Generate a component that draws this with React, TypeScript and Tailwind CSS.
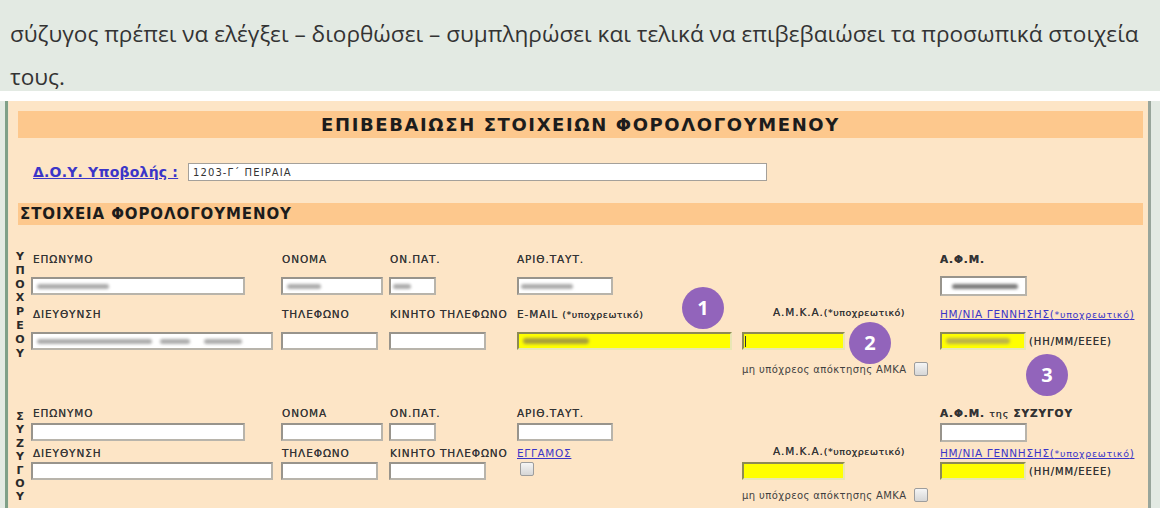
import React from 'react';

const form = { fontFamily: '"DejaVu Sans", Verdana, sans-serif' };

// column widths measured from the left edge of the field area (x = 31)
const cols = ['w-[250px]', 'w-[108px]', 'w-[128px]', 'w-[225px]', 'w-[198px]'];

function Blur({ w, ml = 4, dark = false }: { w: number; ml?: number; dark?: boolean }) {
  return (
    <span
      className={`block h-[5px] rounded-full blur-[1.5px] ${dark ? 'bg-[#7a7a7a]' : 'bg-[#ababab]'}`}
      style={{ width: w, marginLeft: ml }}
    />
  );
}

function Field({
  w,
  h = 18,
  yellow = false,
  children,
}: {
  w: number;
  h?: number;
  yellow?: boolean;
  children?: React.ReactNode;
}) {
  return (
    <div
      className={`flex items-center gap-2 border-2 ${
        yellow
          ? 'bg-[#ffff00] border-t-[#8d8b55] border-l-[#8d8b55] border-r-[#e9e6b4] border-b-[#e9e6b4]'
          : 'bg-white border-t-[#98948c] border-l-[#98948c] border-r-[#b8b4ab] border-b-[#b8b4ab]'
      }`}
      style={{ width: w, height: h }}
    >
      {children}
    </div>
  );
}

function Check() {
  return (
    <span className="inline-block w-[14px] h-[14px] rounded-[2px] border border-[#9d9d9d] bg-gradient-to-b from-[#f5f5f5] to-[#d6d6d6]" />
  );
}

function Label({ children, className = '' }: { children: React.ReactNode; className?: string }) {
  return (
    <span
      className={`text-[10.5px] tracking-[0.9px] text-[#333] whitespace-nowrap [text-shadow:0_0_0.5px_#555] ${className}`}
    >
      {children}
    </span>
  );
}

function Req() {
  return <span className="text-[9.5px] tracking-[0.5px]">(*υποχρεωτικό)</span>;
}

function Link({ children }: { children: React.ReactNode }) {
  return <span className="text-[10.5px] tracking-[0.7px] text-[#3b35c8] underline whitespace-nowrap">{children}</span>;
}

function Badge({ n, x, y }: { n: number; x: string; y: string }) {
  return (
    <div
      className={`absolute ${x} ${y} w-[42px] h-[42px] rounded-full bg-[#9264bb] flex items-center justify-center text-white text-[20px] font-bold`}
      style={{ fontFamily: '"Open Sans", sans-serif' }}
    >
      {n}
    </div>
  );
}

function Letters({ text, className }: { text: string; className: string }) {
  return (
    <div className={`w-[22px] shrink-0 flex flex-col items-center font-bold text-[11px] text-[#2a2a2a] ${className}`}>
      {text.split('').map((c, i) => (
        <span key={i}>{c}</span>
      ))}
    </div>
  );
}

function NoAmka() {
  return (
    <div className="flex items-center gap-[8px] whitespace-nowrap">
      <span className="text-[10px] tracking-[0.4px] text-[#3f3f3f]">μη υπόχρεος απόκτησης ΑΜΚΑ</span>
      <Check />
    </div>
  );
}

export default function App() {
  return (
    <div className="relative w-[1160px] h-[508px] overflow-hidden bg-white">
      {/* intro text */}
      <div
        className="h-[91px] bg-[#e3eae3] pl-[10px] pt-[12px] text-[22.6px] leading-[43px] text-[#333] whitespace-nowrap"
        style={{ fontFamily: '"Open Sans", sans-serif' }}
      >
        σύζυγος πρέπει να ελέγξει – διορθώσει – συμπληρώσει και τελικά να επιβεβαιώσει τα προσωπικά στοιχεία
        <br />
        τους.
      </div>
      <div className="h-[10px] bg-white" />

      {/* form frame */}
      <div className="flex h-[407px]" style={form}>
        <div className="w-[5px] bg-[#e3eae3]" />
        <div className="w-[3px] bg-[#7fa088]" />
        <div className="w-[1px] bg-[#f3e4cd]" />
        <div className="flex-1 bg-[#fde5c6] flex flex-col">
          <div className="mt-[10px] ml-[9px] mr-[5px] h-[27px] bg-[#fdc88d] flex items-center justify-center">
            <span className="text-[18px] font-bold tracking-[1.6px] text-[#1c1c1c]">
              ΕΠΙΒΕΒΑΙΩΣΗ ΣΤΟΙΧΕΙΩΝ ΦΟΡΟΛΟΓΟΥΜΕΝΟΥ
            </span>
          </div>

          <div className="mt-[25px] flex items-center h-[18px]">
            <span className="ml-[24px] w-[155px] text-[14px] font-bold tracking-[0.2px] text-[#3b35c8] underline whitespace-nowrap">
              Δ.Ο.Υ. Υποβολής :
            </span>
            <div className="w-[579px] h-[18px] bg-white border border-[#a4a09a] flex items-center pl-[4px] text-[10px] tracking-[1.1px] text-[#333]">
              1203-Γ΄ ΠΕΙΡΑΙΑ
            </div>
          </div>

          <div className="mt-[22px] ml-[9px] mr-[5px] h-[22px] bg-[#fdc88d] flex items-center pl-[2px]">
            <span className="text-[15px] font-bold tracking-[0.9px] text-[#1c1c1c]">ΣΤΟΙΧΕΙΑ ΦΟΡΟΛΟΓΟΥΜΕΝΟΥ</span>
          </div>

          {/* taxpayer */}
          <div className="flex">
            <Letters text="ΥΠΟΧΡΕΟΥ" className="pt-[25px] leading-[13.8px]" />
            <div className="flex flex-col">
              <div className="mt-[25px] h-[16px] flex items-center">
                <div className={`${cols[0]} pl-[2px]`}><Label>ΕΠΩΝΥΜΟ</Label></div>
                <div className={`${cols[1]} pl-[1px]`}><Label>ΟΝΟΜΑ</Label></div>
                <div className={`${cols[2]} pl-[1px]`}><Label>ΟΝ.ΠΑΤ.</Label></div>
                <div className={cols[3]}><Label>ΑΡΙΘ.ΤΑΥΤ.</Label></div>
                <div className={cols[4]} />
                <div><Label className="font-bold text-[#111] tracking-[0.3px]">Α.Φ.Μ.</Label></div>
              </div>
              <div className="mt-[10px] h-[20px] flex items-center">
                <div className={cols[0]}><Field w={214}><Blur w={72} /></Field></div>
                <div className={cols[1]}><Field w={102}><Blur w={34} /></Field></div>
                <div className={cols[2]}><Field w={47}><Blur w={18} ml={2} /></Field></div>
                <div className={cols[3]}><Field w={96}><Blur w={52} ml={2} /></Field></div>
                <div className={cols[4]} />
                <div><Field w={87} h={20}><Blur w={66} ml={10} dark /></Field></div>
              </div>
              <div className="mt-[9px] h-[16px] flex items-center">
                <div className={`${cols[0]} pl-[2px]`}><Label>ΔΙΕΥΘΥΝΣΗ</Label></div>
                <div className={`${cols[1]} pl-[1px]`}><Label>ΤΗΛΕΦΩΝΟ</Label></div>
                <div className={`${cols[2]} pl-[1px]`}><Label>ΚΙΝΗΤΟ ΤΗΛΕΦΩΝΟ</Label></div>
                <div className={cols[3]}><Label>E-MAIL <Req /></Label></div>
                <div className={`${cols[4]} flex justify-center pr-[4px]`}><Label>Α.Μ.Κ.Α.<Req /></Label></div>
                <div><Link>ΗΜ/ΝΙΑ ΓΕΝΝΗΣΗΣ(<span className="text-[9.5px]">*υποχρεωτικό</span>)</Link></div>
              </div>
              <div className="mt-[11px] h-[18px] flex items-center">
                <div className={cols[0]}>
                  <Field w={242}>
                    <Blur w={115} />
                    <Blur w={30} ml={0} />
                    <Blur w={38} ml={6} />
                  </Field>
                </div>
                <div className={cols[1]}><Field w={97} /></div>
                <div className={cols[2]}><Field w={97} /></div>
                <div className={cols[3]}>
                  <Field w={215} yellow>
                    <span className="block w-[66px] ml-[4px] h-[6px] rounded-full blur-[1.5px] bg-[#a8a03a]" />
                  </Field>
                </div>
                <div className={cols[4]}>
                  <Field w={103} yellow><span className="ml-[1px] w-[1px] h-[11px] bg-[#333]" /></Field>
                </div>
                <div className="flex items-center gap-[3px]">
                  <Field w={86} yellow><span className="block w-[64px] ml-[4px] h-[6px] rounded-full blur-[1.5px] bg-[#bdb548]" /></Field>
                  <Label className="text-[10px] tracking-[0.5px]">(ΗΗ/ΜΜ/ΕΕΕΕ)</Label>
                </div>
              </div>
              <div className="mt-[12px] h-[14px] flex items-center">
                <div className={cols[0]} />
                <div className={cols[1]} />
                <div className={cols[2]} />
                <div className={cols[3]} />
                <div className={cols[4]}><NoAmka /></div>
              </div>
            </div>
          </div>

          {/* spouse */}
          <div className="flex">
            <Letters text="ΣΥΖΥΓΟΥ" className="pt-[34px] leading-[13.4px]" />
            <div className="flex flex-col">
              <div className="mt-[28px] h-[16px] flex items-center">
                <div className={`${cols[0]} pl-[2px]`}><Label>ΕΠΩΝΥΜΟ</Label></div>
                <div className={`${cols[1]} pl-[1px]`}><Label>ΟΝΟΜΑ</Label></div>
                <div className={`${cols[2]} pl-[1px]`}><Label>ΟΝ.ΠΑΤ.</Label></div>
                <div className={cols[3]}><Label>ΑΡΙΘ.ΤΑΥΤ.</Label></div>
                <div className={cols[4]} />
                <div>
                  <Label className="text-[#111] tracking-[0.3px]">
                    <b>Α.Φ.Μ.</b> <span className="text-[9.5px]">της</span> <b>ΣΥΖΥΓΟΥ</b>
                  </Label>
                </div>
              </div>
              <div className="mt-[3px] h-[18px] flex items-center">
                <div className={cols[0]}><Field w={214} /></div>
                <div className={cols[1]}><Field w={102} /></div>
                <div className={cols[2]}><Field w={47} /></div>
                <div className={cols[3]}><Field w={96} /></div>
                <div className={cols[4]} />
                <div><Field w={87} h={19} /></div>
              </div>
              <div className="mt-[3px] h-[16px] flex items-center">
                <div className={`${cols[0]} pl-[2px]`}><Label>ΔΙΕΥΘΥΝΣΗ</Label></div>
                <div className={`${cols[1]} pl-[1px]`}><Label>ΤΗΛΕΦΩΝΟ</Label></div>
                <div className={`${cols[2]} pl-[1px]`}><Label>ΚΙΝΗΤΟ ΤΗΛΕΦΩΝΟ</Label></div>
                <div className={cols[3]}><Link>ΕΓΓΑΜΟΣ</Link></div>
                <div className={`${cols[4]} flex justify-center pr-[4px]`}><Label>Α.Μ.Κ.Α.<Req /></Label></div>
                <div><Link>ΗΜ/ΝΙΑ ΓΕΝΝΗΣΗΣ(<span className="text-[9.5px]">*υποχρεωτικό</span>)</Link></div>
              </div>
              <div className="mt-[2px] h-[18px] flex items-center">
                <div className={cols[0]}><Field w={242} /></div>
                <div className={cols[1]}><Field w={97} /></div>
                <div className={cols[2]}><Field w={97} /></div>
                <div className={`${cols[3]} pl-[3px]`}><Check /></div>
                <div className={cols[4]}><Field w={103} yellow /></div>
                <div className="flex items-center gap-[3px]">
                  <Field w={86} yellow />
                  <Label className="text-[10px] tracking-[0.5px]">(ΗΗ/ΜΜ/ΕΕΕΕ)</Label>
                </div>
              </div>
              <div className="mt-[8px] h-[14px] flex items-center">
                <div className={cols[0]} />
                <div className={cols[1]} />
                <div className={cols[2]} />
                <div className={cols[3]} />
                <div className={cols[4]}><NoAmka /></div>
              </div>
            </div>
          </div>
        </div>
        <div className="w-[3px] bg-[#98a59b]" />
        <div className="w-[9px] bg-[#e3eae3]" />
      </div>

      <Badge n={1} x="left-[682px]" y="top-[287px]" />
      <Badge n={2} x="left-[849px]" y="top-[322px]" />
      <Badge n={3} x="left-[1026px]" y="top-[354px]" />
    </div>
  );
}
